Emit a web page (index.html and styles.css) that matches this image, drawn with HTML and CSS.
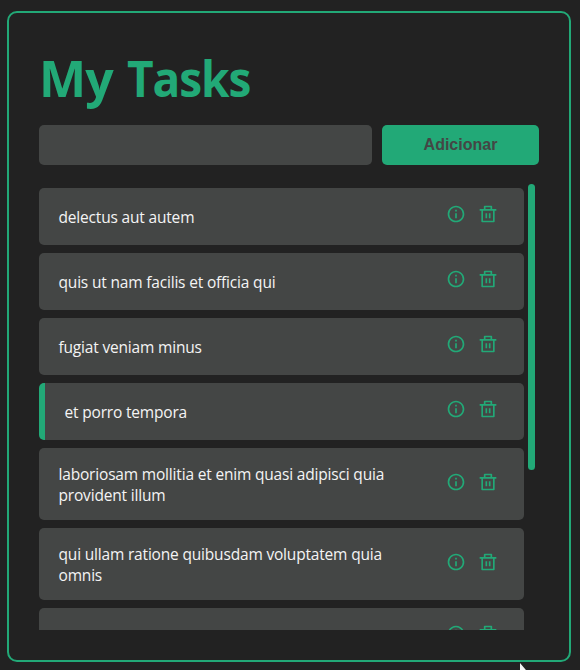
FILE: index.html
```html
<!DOCTYPE html>
<html lang="pt-BR">
<head>
<meta charset="utf-8">
<title>My Tasks</title>
<link rel="stylesheet" href="styles.css">
</head>
<body>
<svg class="defs" width="0" height="0">
  <symbol id="info" viewBox="0 0 24 24"><path d="M12 22C6.477 22 2 17.523 2 12S6.477 2 12 2s10 4.477 10 10-4.477 10-10 10zm0-2a8 8 0 1 0 0-16 8 8 0 0 0 0 16zM11 7h2v2h-2V7zm0 4h2v6h-2v-6z"/></symbol>
  <symbol id="trash" viewBox="0 0 24 24"><path d="M17 6h5v2h-2v13a1 1 0 0 1-1 1H5a1 1 0 0 1-1-1V8H2V6h5V3a1 1 0 0 1 1-1h8a1 1 0 0 1 1 1v3zm1 2H6v12h12V8zm-9 3h2v6H9v-6zm4 0h2v6h-2v-6zM9 4v2h6V4H9z"/></symbol>
</svg>
<main class="card">
  <h1>My <span>Tasks</span></h1>
  <form class="add-task">
    <input type="text">
    <button type="button">Adicionar</button>
  </form>
  <section class="list">
    <div class="items">
      <div class="task"><p>delectus aut autem</p><div class="actions"><svg><use href="#info"/></svg><svg><use href="#trash"/></svg></div></div>
      <div class="task"><p>quis ut nam facilis et officia qui</p><div class="actions"><svg><use href="#info"/></svg><svg><use href="#trash"/></svg></div></div>
      <div class="task"><p>fugiat veniam minus</p><div class="actions"><svg><use href="#info"/></svg><svg><use href="#trash"/></svg></div></div>
      <div class="task done"><p>et porro tempora</p><div class="actions"><svg><use href="#info"/></svg><svg><use href="#trash"/></svg></div></div>
      <div class="task"><p>laboriosam mollitia et enim quasi adipisci quia<br>provident illum</p><div class="actions"><svg><use href="#info"/></svg><svg><use href="#trash"/></svg></div></div>
      <div class="task"><p>qui ullam ratione quibusdam voluptatem quia<br>omnis</p><div class="actions"><svg><use href="#info"/></svg><svg><use href="#trash"/></svg></div></div>
      <div class="task"><p></p><div class="actions"><svg><use href="#info"/></svg><svg><use href="#trash"/></svg></div></div>
    </div>
    <div class="scrollbar"></div>
  </section>
</main>
<svg class="cursor" viewBox="0 0 12 18"><path d="M0 0v17l4-4h7z"/></svg>
</body>
</html>
```
FILE: styles.css
```css
* { margin: 0; padding: 0; box-sizing: border-box; }

body {
  height: 670px;
  padding: 11px 9px 8px 7px;
  overflow: hidden;
  background: #222;
  color: #f4f4f4;
  font-family: "Open Sans", "Noto Sans", sans-serif;
}

.defs { position: absolute; }

.card {
  display: flex;
  flex-direction: column;
  height: 651px;
  padding: 30px;
  border: 2px solid #22a977;
  border-radius: 10px;
}

h1 {
  height: 70px;
  margin-bottom: 12px;
  color: #22a977;
  font-size: 50px;
  line-height: 70px;
  letter-spacing: -0.8px;
  word-spacing: 1.5px;
  white-space: nowrap;
}

h1 span {
  display: inline-block;
  letter-spacing: -1.2px;
  transform: scaleX(0.92);
  transform-origin: left;
}

.add-task { display: flex; gap: 10px; height: 40px; margin-bottom: 19px; }

.add-task input {
  width: 333px;
  border: 0;
  border-radius: 5px;
  background: #444645;
}

.add-task button {
  flex: 1;
  border: 0;
  border-radius: 5px;
  background: #22a977;
  color: #444645;
  font: bold 16px "Liberation Sans", Arial, sans-serif;
}

.list { display: flex; gap: 4px; height: 446px; overflow: hidden; }

.items {
  display: flex;
  flex-direction: column;
  gap: 8px;
  width: 485px;
  padding-top: 4px;
}

.task {
  display: flex;
  flex: none;
  align-items: center;
  justify-content: space-between;
  min-height: 57px;
  padding: 16px 26px 14px 19.5px;
  border-radius: 5px;
  background: #444645;
}

.task.done { border-left: 6px solid #22a977; }

.task p {
  font-size: 15.5px;
  line-height: 21px;
  letter-spacing: -0.18px;
  white-space: nowrap;
}

.actions { display: flex; gap: 12px; margin-bottom: 7px; }
.actions svg { width: 20px; height: 20px; fill: #22a977; }

.scrollbar {
  width: 7px;
  height: 286px;
  border-radius: 4px;
  background: #22a977;
}

.cursor {
  position: absolute;
  left: 520px;
  top: 663px;
  width: 12px;
  height: 18px;
  fill: #f5f5f5;
}
```
